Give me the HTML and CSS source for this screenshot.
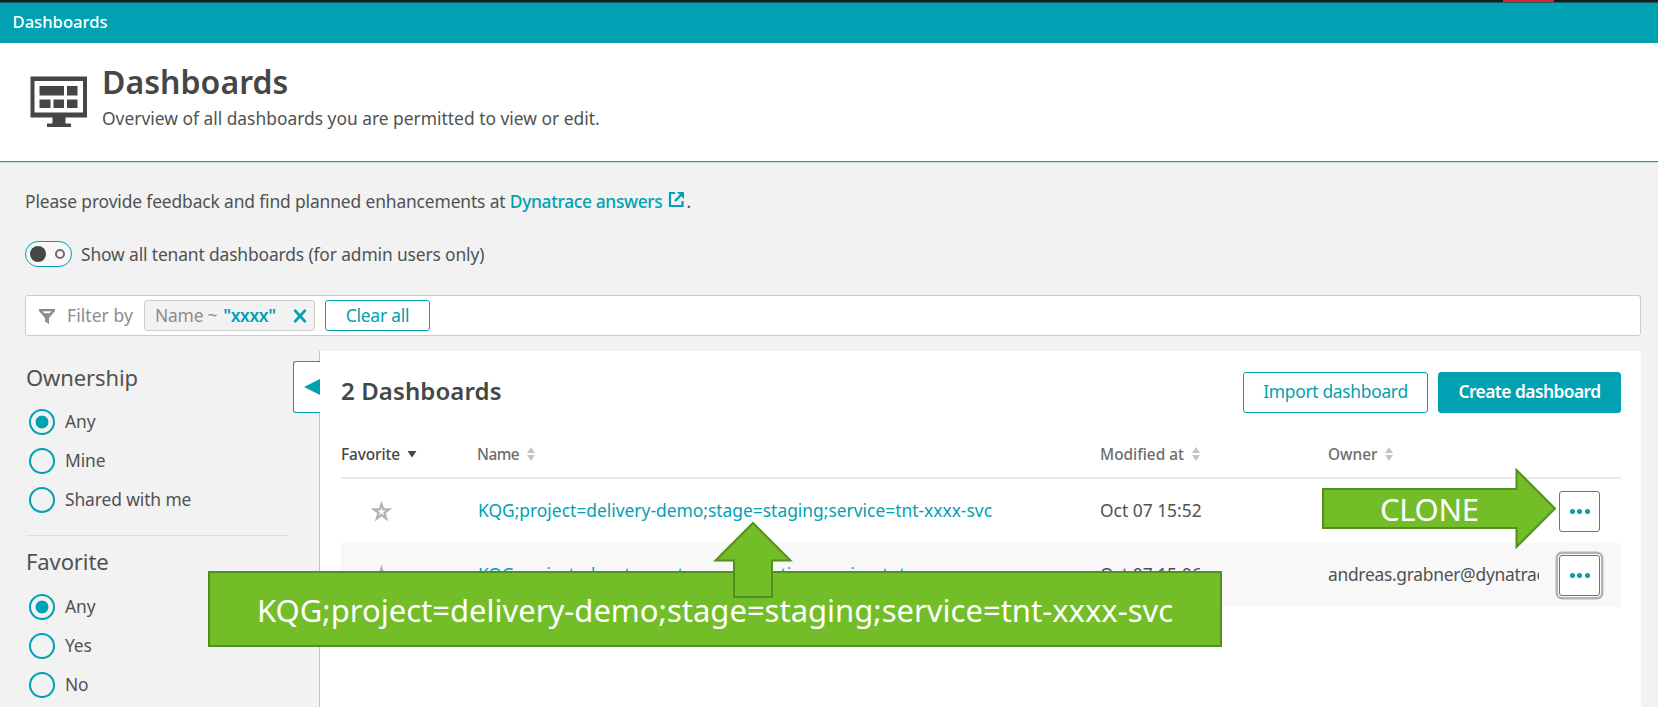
FILE: index.html
```html
<!DOCTYPE html>
<html lang="en">
<head>
<meta charset="utf-8">
<title>Dashboards</title>
<link rel="stylesheet" href="styles.css">
</head>
<body>
<div class="page">
  <div class="top-strip"><span class="top-strip-mark"></span></div>
  <nav class="crumbs">Dashboards</nav>

  <header class="page-header">
    <svg class="header-icon" viewBox="0 0 58 52" width="58" height="52">
      <path fill="#454646" fill-rule="evenodd" d="M0.500 0.500H57V41.500H35.500V47.500H41V51H17V47.500H22.500V41.500H0.500ZM4.500 5V36.500H53V5Z"/>
      <path fill="#454646" d="M9.500 10H34V19.500H9.500ZM37 10H47.500V19.500H37ZM9.500 23.500H20.500V32H9.500ZM23.500 23.500H34V32H23.500ZM37 23.500H47.500V32H37Z"/>
    </svg>
    <div>
      <h1 class="title">Dashboards</h1>
      <p class="subtitle">Overview of all dashboards you are permitted to view or edit.</p>
    </div>
  </header>

  <main class="content">
    <p class="feedback">Please provide feedback and find planned enhancements at <a class="answers">Dynatrace answers</a><svg class="external" viewBox="0 0 17 17" width="17" height="17"><path fill="none" stroke="#00a1b2" stroke-width="2.200" d="M7 2H2V15H14.500V10"/><path fill="none" stroke="#00a1b2" stroke-width="2.400" d="M7 10L14 3"/><path fill="#00a1b2" d="M9 1H16V8Z"/></svg><span>.</span></p>

    <div class="tenant">
      <span class="switch"><span class="switch-knob"></span><span class="switch-off"></span></span>
      <span class="tenant-label">Show all tenant dashboards (for admin users only)</span>
    </div>

    <div class="filter">
      <svg class="funnel" viewBox="0 0 16 15" width="16" height="15"><path fill="#8c8c8c" fill-rule="evenodd" d="M0 0H16V2L10 9V15L6 12.500V9L0 2ZM3.600 2.200L5.200 4.200H10.800L12.400 2.200Z"/></svg>
      <span class="filter-by">Filter by</span>
      <span class="tag"><span class="tag-text">Name ~</span><b class="tag-value">"xxxx"</b><svg class="tag-x" viewBox="0 0 14 14" width="14" height="14"><path stroke="#00a1b2" stroke-width="2.600" d="M1.500 1L12.500 13M12.500 1L1.500 13"/></svg></span>
      <button class="clear">Clear all</button>
    </div>

    <div class="columns">
      <aside class="sidebar">
        <section class="group">
          <h2 class="group-title">Ownership</h2>
          <div class="option"><span class="radio on"></span>Any</div>
          <div class="option"><span class="radio"></span>Mine</div>
          <div class="option"><span class="radio"></span>Shared with me</div>
        </section>
        <section class="group">
          <h2 class="group-title second">Favorite</h2>
          <div class="option"><span class="radio on"></span>Any</div>
          <div class="option"><span class="radio"></span>Yes</div>
          <div class="option"><span class="radio"></span>No</div>
        </section>
      </aside>

      <section class="panel">
        <div class="collapse"><svg viewBox="0 0 16 16" width="16" height="16"><path fill="#00a1b2" d="M0 8L16 0V16Z"/></svg></div>
        <div class="panel-head">
          <h2 class="panel-title">2 Dashboards</h2>
          <button class="btn import">Import dashboard</button>
          <button class="btn create">Create dashboard</button>
        </div>

        <div class="grid head">
          <div class="th sorted">Favorite<svg class="caret" viewBox="0 0 10 7" width="10" height="7"><path fill="#454646" d="M0.500 0H9.500L5 6.500Z"/></svg></div>
          <div class="th name">Name<svg class="sort" viewBox="0 0 8 14" width="8" height="14"><path fill="#c4c4c4" d="M4 0L8 6H0ZM4 14L8 8H0Z"/></svg></div>
          <div class="th">Modified at<svg class="sort" viewBox="0 0 8 14" width="8" height="14"><path fill="#c4c4c4" d="M4 0L8 6H0ZM4 14L8 8H0Z"/></svg></div>
          <div class="th">Owner<svg class="sort" viewBox="0 0 8 14" width="8" height="14"><path fill="#c4c4c4" d="M4 0L8 6H0ZM4 14L8 8H0Z"/></svg></div>
        </div>

        <div class="grid row">
          <svg class="star" viewBox="0 0 22 22" width="23" height="23"><path fill="#b4b4b4" fill-rule="evenodd" d="M11 0.500L13.500 8H21.500L15.100 12.700L17.500 20.500L11 15.800L4.500 20.500L6.900 12.700L0.500 8H8.500ZM11 7L10.100 10H7L9.500 11.900L8.600 14.700L11 12.900L13.400 14.700L12.500 11.900L15 10H11.900Z"/></svg>
          <a class="link">KQG;project=delivery-demo;stage=staging;service=tnt-xxxx-svc</a>
          <span class="date">Oct 07 15:52</span>
          <span class="owner"></span>
          <span class="more"><i></i><i></i><i></i></span>
        </div>
        <div class="grid row alt">
          <svg class="star" viewBox="0 0 22 22" width="23" height="23"><path fill="#b4b4b4" fill-rule="evenodd" d="M11 0.500L13.500 8H21.500L15.100 12.700L17.500 20.500L11 15.800L4.500 20.500L6.900 12.700L0.500 8H8.500ZM11 7L10.100 10H7L9.500 11.900L8.600 14.700L11 12.900L13.400 14.700L12.500 11.900L15 10H11.900Z"/></svg>
          <a class="link long">KQG;project=dynatrace;stage=production;service=tnt-xxxx-svc</a>
          <span class="date">Oct 07 15:06</span>
          <span class="owner">andreas.grabner@dynatrac</span>
          <span class="more focused"><i></i><i></i><i></i></span>
        </div>
      </section>
    </div>
  </main>

  <div class="callout">KQG;project=delivery-demo;stage=staging;service=tnt-xxxx-svc</div>
  <svg class="arrow-up" viewBox="0 0 80 78" width="80" height="78"><path fill="#73be28" stroke="#538f1b" stroke-width="2" d="M40 2L77.500 39.500H59V76H21V39.500H2.500Z"/></svg>
  <div class="arrow-right">
    <svg class="arrow-shape" viewBox="0 0 236 82" width="236" height="82"><path fill="#73be28" stroke="#538f1b" stroke-width="2" d="M2 22H195.500V3L234 41.500L195.500 80V61H2Z"/></svg>
    <span class="arrow-label">CLONE</span>
  </div>
</div>
</body>
</html>
```
FILE: styles.css
```css
* { box-sizing: border-box; }
body {
  margin: 0;
  background: #f2f2f2;
  color: #505151;
  font: 17.4px/24px "Noto Sans", "Open Sans", sans-serif;
}
h1, h2, p { margin: 0; }
.page { position: relative; width: 1658px; height: 707px; overflow: hidden; }

.top-strip { height: 3px; background: #1a1a1a; border-bottom: 1px solid #11606a; }
.top-strip-mark { display: block; width: 51px; height: 2px; margin-left: 1503px; background: #e01f2f; }
.crumbs {
  height: 40px;
  padding: 7px 0 0 12.5px;
  background: #00a1b2;
  color: #fff;
  font-size: 16.6px;
  font-weight: 500;
}

.page-header {
  display: flex;
  gap: 15px;
  height: 119px;
  padding: 33px 0 0 30px;
  background: #fff;
  border-bottom: 1px solid #00a1b2;
  box-shadow: 0 1px 0 #c5e4e8;
}
.header-icon { flex: none; }
.title { margin: -14px 0 0 -1px; color: #454646; font-size: 32px; line-height: 40px; font-weight: 600; letter-spacing: 0.05px; }
.subtitle { margin: 4px 0 0 -1px; }

.content { padding: 27px 17px 0 25px; }
.feedback { display: flex; height: 24px; letter-spacing: -0.13px; white-space: pre; }
.answers { color: #00a1b2; font-weight: 500; letter-spacing: -0.35px; }
.external { margin: 2px 1px 0 6px; }

.tenant { display: flex; align-items: center; gap: 9px; height: 26px; margin-top: 28px; }
.switch {
  display: flex;
  align-items: center;
  justify-content: space-between;
  width: 47px;
  height: 26px;
  padding: 0 6px 0 4px;
  border: 1.5px solid #00a1b2;
  border-radius: 13px;
  background: #f8f8f8;
}
.switch-knob { width: 16px; height: 16px; border-radius: 50%; background: #454646; }
.switch-off { width: 10px; height: 10px; border: 2px solid #6d6d6d; border-radius: 50%; }
.tenant-label { letter-spacing: -0.13px; }

.filter {
  display: flex;
  align-items: center;
  height: 41px;
  margin-top: 28px;
  padding-left: 13px;
  background: #fff;
  border: 1px solid #ccc;
  border-radius: 3px;
  color: #8c8c8c;
}
.filter-by { margin: -2px 0 0 12px; width: 77px; letter-spacing: 0.1px; }
.funnel { margin-top: 2px; }
.tag {
  display: flex;
  align-items: center;
  width: 171px;
  height: 31px;
  padding: 0 7px 0 10px;
  background: #f2f2f2;
  border: 1px solid #ccc;
  border-radius: 3px;
  letter-spacing: -0.2px;
}
.tag-text { margin-top: -2px; }
.tag-value { margin: -2px 0 0 6px; color: #00a1b2; font-weight: 600; letter-spacing: -0.4px; }
.tag-x { margin-left: auto; }
.clear {
  width: 105px;
  height: 31px;
  margin-left: 10px;
  padding: 0 0 2px;
  background: #fff;
  border: 1.5px solid #00a1b2;
  border-radius: 3px;
  color: #00a1b2;
  font: 450 17.4px/24px "Noto Sans", sans-serif;
  letter-spacing: -0.2px;
}

.columns { display: flex; margin-top: 15px; }
.sidebar { width: 294px; padding: 12px 30px 0 1px; }
.group + .group { margin-top: 17px; border-top: 1px solid #dedede; padding-top: 11px; }
.group-title { height: 38px; font-size: 22px; line-height: 28px; font-weight: 400; letter-spacing: -0.1px; }
.second { height: 39px; }
.option { display: flex; align-items: center; gap: 10px; height: 39px; padding: 0 0 0 3px; letter-spacing: -0.1px; }
.radio { flex: none; width: 26px; height: 26px; margin-top: 2px; border: 2px solid #00a1b2; border-radius: 50%; }
.radio.on { background: radial-gradient(circle, #00a1b2 6px, transparent 6.8px); }

.panel {
  position: relative;
  flex: 1;
  height: 380px;
  padding: 21px 20px 0 21px;
  background: #fff;
  border-left: 1px solid #c4c4c4;
  border-top-right-radius: 3px;
}
.collapse {
  position: absolute;
  left: -27px;
  top: 10px;
  display: flex;
  align-items: center;
  width: 27px;
  height: 52px;
  padding-left: 10px;
  background: #fff;
  border: 1.5px solid #00a1b2;
  border-right: 0;
  border-radius: 3px 0 0 3px;
}
.panel-head { display: flex; align-items: flex-start; height: 63px; }
.panel-title { flex: 1; color: #454646; font-size: 24px; line-height: 38px; font-weight: 600; letter-spacing: 0.1px; }
.btn {
  height: 41px;
  padding: 0 0 3px;
  border: 1.5px solid #00a1b2;
  border-radius: 3px;
  font: 450 17.4px/24px "Noto Sans", sans-serif;
  letter-spacing: -0.3px;
}
.import { width: 185px; background: #fff; color: #00a1b2; }
.create { width: 183px; margin-left: 10px; background: #00a1b2; color: #fff; font-weight: 600; letter-spacing: -0.55px; }

.grid { display: grid; grid-template-columns: 136px 623px 228px 231px 1fr; }
.head { height: 44px; padding-top: 8px; border-bottom: 2px solid #ebebeb; }
.th { display: flex; font-size: 15.4px; font-weight: 500; color: #6d6d6d; }
.sorted { color: #454646; letter-spacing: -0.1px; }
.caret { margin: 8px 0 0 7px; }
.sort { margin: 4px 0 0 8px; }
.name { letter-spacing: -0.5px; }
.row { height: 64px; align-items: center; padding-bottom: 1px; white-space: nowrap; }
.alt { background: #f8f8f8; }
.star { margin: 2px 0 0 29px; }
.link, .date, .owner { margin-top: -2px; }
.link { margin-left: 1px; color: #00a1b2; }
.long { letter-spacing: -0.12px; }
.owner { width: 211px; overflow: hidden; letter-spacing: -0.28px; }
.more {
  display: flex;
  align-items: center;
  justify-content: center;
  gap: 2.5px;
  width: 41px;
  height: 41px;
  margin-top: 1px;
  background: #fff;
  border: 1.5px solid #00a1b2;
  border-radius: 3px;
}
.more i { width: 5px; height: 5px; border-radius: 50%; background: #00a1b2; }
.focused { box-shadow: 0 0 0 1px #f8f8f8, 0 0 0 3.5px #b4b4b4; }

.callout {
  position: absolute;
  left: 208px;
  top: 571px;
  width: 1014px;
  height: 76px;
  padding-left: 47px;
  background: #73be28;
  border: 2px solid #538f1b;
  color: #fff;
  font-size: 31px;
  line-height: 74px;
  white-space: nowrap;
}
.arrow-up { position: absolute; left: 713px; top: 521px; }
.arrow-right { position: absolute; left: 1321px; top: 467px; width: 236px; height: 82px; }
.arrow-shape { position: absolute; left: 0; top: 0; }
.arrow-label {
  position: absolute;
  left: 59px;
  top: 22px;
  color: #fff;
  font-size: 31px;
  line-height: 40px;
  letter-spacing: -0.3px;
}
```
